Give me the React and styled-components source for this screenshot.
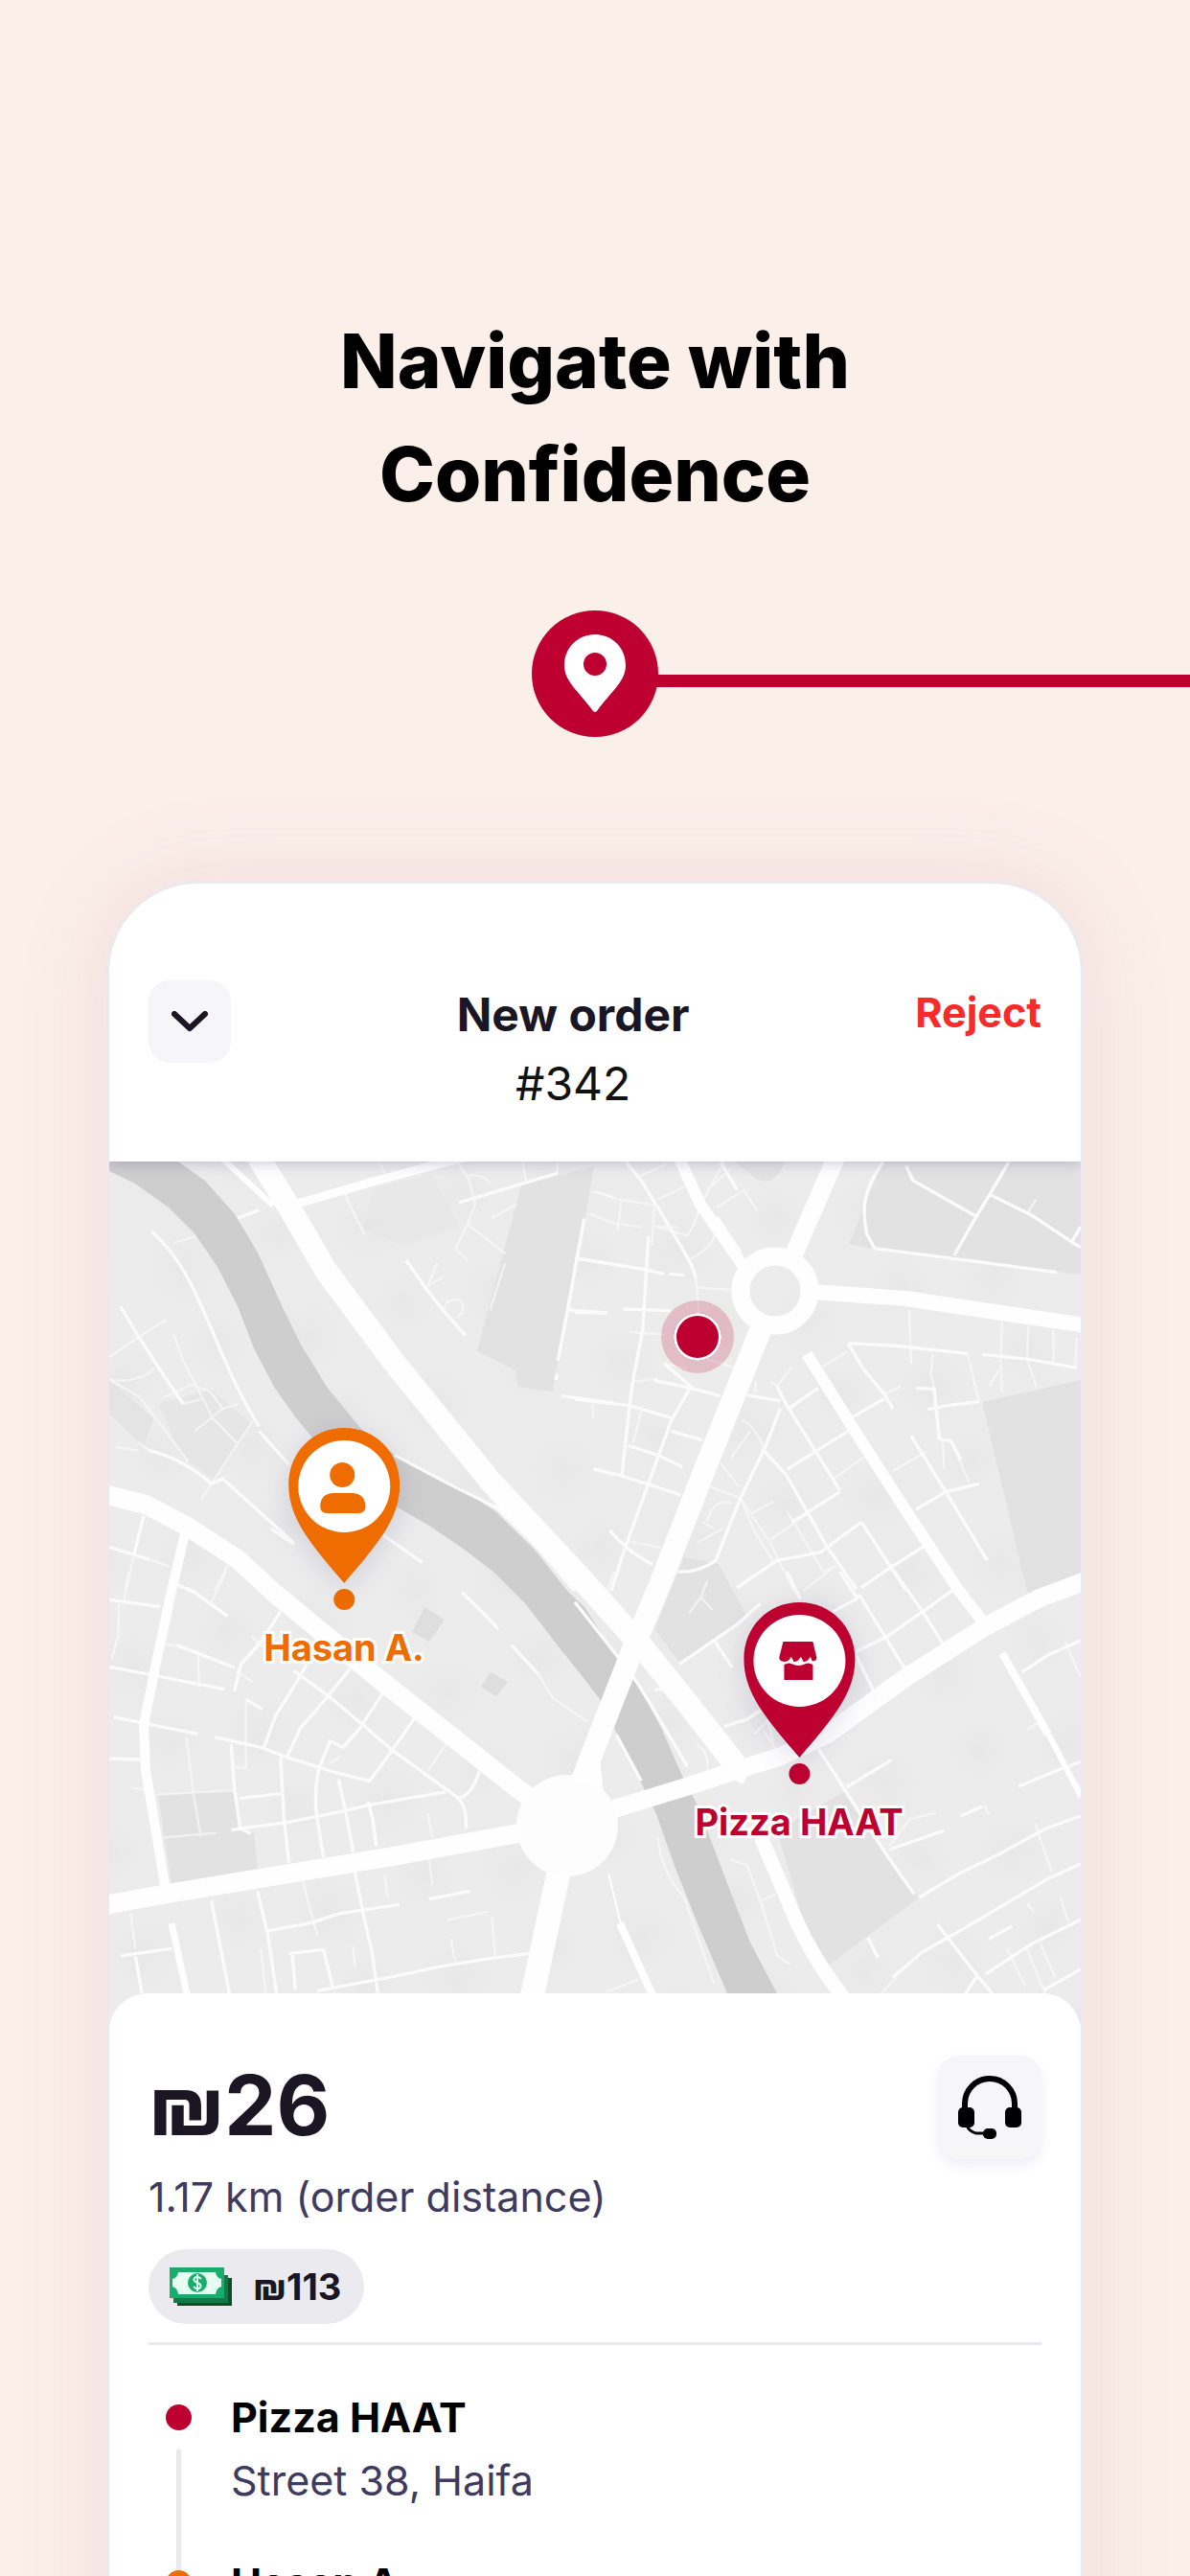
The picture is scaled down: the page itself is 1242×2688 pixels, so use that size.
import React from "react";
import styled, { createGlobalStyle } from "styled-components";

const crimson = "#bd0030";
const orange = "#ee6c00";

// small streets, drawn quarter by quarter
const streets = [
    {
        id: "nw",
        transform: "translate(100 1200) scale(0.3444 0.3333)",
        medium: [
            "M170 255 C260 340 300 440 350 560 S440 780 495 865",
            "M495 880 L585 985",
            "M75 490 L130 585 L205 705 L265 795",
            "M160 940 C240 960 300 1000 350 1045 L385 1030 L600 1230",
            "M430 213 L495 188",
            "M940 345 L1005 440 L1055 505 L1120 580",
            "M1100 165 L1230 125 L1400 72",
            "M1480 215 L1430 500 L1400 660 M1398 700 L1394 720",
            "M1462 340 L1568 358 M1430 500 L1550 510 M1410 770 L1568 792",
            "M905 955 L1060 1040 L1215 1120 L1330 1235 L1450 1380",
            "M40 1243 L165 1282 M145 1145 L115 1270",
            "M530 1185 L600 1235 M870 1205 L990 1292",
        ],
        thin: [
            "M755 135 C775 190 790 215 815 265",
            "M860 38 L875 72 M1095 38 L1130 90 L1150 170 L1125 235 L1090 310 L1128 345",
            "M1130 235 L1180 275 L1242 325 M1200 212 L1275 170",
            "M1130 80 Q1180 75 1195 105 M1293 38 L1305 105 M1400 38 L1398 72",
            "M1240 355 L1195 500 M1035 355 L1005 425 L1050 400",
            "M1055 505 Q1060 460 1100 470 Q1130 490 1095 525",
            "M42 648 L130 585 L215 530",
            "M42 720 L130 770 L175 830 L280 975",
            "M235 575 L265 660 L310 750 L355 840 L430 920",
            "M205 775 L290 735 L345 755 L385 810 L430 797 M265 795 L320 780",
            "M42 720 Q130 730 175 685 M300 880 L385 810",
            "M475 850 L430 920 L350 1045 L320 1092 M130 915 L160 940 M60 930 L130 940",
            "M240 290 L305 270 M115 1270 L92 1380 M165 1282 L225 1305",
            "M400 1300 L360 1380 M250 1370 Q290 1370 300 1380",
            "M1510 1000 L1568 1018 M1508 130 L1568 145 M1505 795 L1508 840",
        ],
    },
    {
        id: "ne",
        transform: "translate(600 1200) scale(0.3457 0.3333)",
        medium: [
            "M155 38 L200 95 L250 180 L300 265 L350 355 L365 400",
            "M440 38 L490 125",
            "M430 210 L500 320",
            "M930 38 C870 130 865 180 882 265 L905 308 L1145 340 L1455 383",
            "M1000 50 L1020 95 L1212 208",
            "M1310 38 L1255 135 L1212 208 L1145 330",
            "M1255 140 L1380 205 L1500 288 L1527 240 M1500 288 L1527 305",
            "M825 605 L960 612 L1185 637 M1230 640 L1370 655 L1515 682",
            "M825 605 L870 685 L935 765 L960 810",
            "M222 270 L205 560 L175 725 L165 800 L142 1020",
            "M0 338 L200 372 L270 388 M285 388 L330 392",
            "M0 780 L165 800 L295 840",
            "M0 508 L95 510 M145 498 L290 503",
            "M270 668 L350 740 L290 850 L220 1050 L150 1250 L110 1380",
            "M55 998 L142 1020 L320 1080",
            "M240 722 L350 745 L440 770 M520 768 L620 785",
            "M620 810 L575 930 L500 1090 L425 1285 Q370 1325 310 1320",
            "M610 740 L640 800 L800 1065",
            "M840 835 L935 778 M645 810 L735 745 M640 1000 L825 880 M655 1165 L800 1070",
            "M490 1370 L610 1285 L740 1260 L865 1165 M865 1165 L950 1300 L1000 1380",
            "M865 1370 L945 1312 L1055 1240 M1030 1125 L1120 1070 L1220 1045",
            "M1015 895 L1120 1070 L1245 1285",
            "M1030 745 L1085 748 L1100 905 L1135 910 L1165 970",
            "M1065 812 L1140 798 L1220 788",
            "M105 1190 Q150 1250 235 1298",
            "M290 880 L385 908",
            "M160 925 L250 955 L325 992",
            "M565 935 L640 1020 L700 1130 L760 1240 L850 1375",
        ],
        thin: [
            "M60 130 L130 155 L240 172 M140 155 L130 250 M190 85 L275 45 M250 155 L340 110",
            "M245 240 L340 268 Q370 220 375 180 L450 38 M350 340 Q410 310 425 260",
            "M240 180 L232 300 M232 238 L310 242 M45 200 L120 230 L200 242",
            "M400 125 L470 60 M430 180 L510 125 L550 190",
            "M365 400 L375 510 M365 430 L475 438",
            "M165 570 L270 578 M270 668 L340 685 M400 655 L475 680",
            "M205 800 L175 920 M175 725 L250 715",
            "M505 845 Q540 860 570 930 M530 880 L470 965 M440 980 L495 1055 M410 1055 L495 1088",
            "M500 1090 L590 1230 L660 1380 M500 1090 L540 1190 L600 1290",
            "M640 1130 L750 1320 L790 1300 M590 1220 L700 1140",
            "M400 1160 Q420 1090 470 1105 M370 1230 L445 1185 M385 1165 L420 1185",
            "M530 1140 L600 1100 M690 1380 L790 1300 M160 1225 L260 1245",
            "M1010 500 L1015 670 M1190 510 L1200 505 M1290 540 L1285 650 L1290 760",
            "M1370 550 L1365 655 L1395 745 M1445 560 L1445 665 M1515 590 L1510 682",
            "M1185 637 L1220 788 M1080 640 L1075 700 L1085 748 M1280 690 L1250 740",
            "M745 680 L825 630 M780 1030 L875 960 M960 1005 L1060 945",
            "M1110 905 L1115 1000 M1135 910 L1190 1040 M1365 200 L1392 155",
            "M935 765 L985 738 M655 680 L610 740 L590 725 M545 720 L545 760",
        ],
    },
    {
        id: "sw",
        transform: "translate(100 1640) scale(0.3444 0.3333)",
        medium: [
            "M42 88 L195 110",
            "M245 40 L300 65 L400 140",
            "M55 455 L150 475 L310 508 M360 518 L500 550 L570 578 L730 630 L830 655 L880 585 L965 460",
            "M42 585 L135 588",
            "M42 298 L180 325 L300 350 L390 368",
            "M245 230 L320 260 L420 300",
            "M560 125 L500 220 L440 290 L420 375",
            "M640 290 L600 360 L545 450 L510 550 M770 305 L695 400 L620 490 L580 578",
            "M870 380 L800 490 L750 550 L710 530 L675 620 Q660 700 670 770 L690 895",
            "M600 310 L700 385 L810 480 L900 560 L1000 635 L1100 710 Q1125 740 1122 805",
            "M1162 625 Q1140 700 1100 710",
            "M410 808 L580 785 L750 750 L830 730 L1060 690",
            "M560 580 L570 770 L585 910",
            "M410 540 L420 680 L438 805 L470 820",
            "M735 650 L755 740 L780 880 M825 720 L840 780 L850 860",
            "M490 1000 L520 1130 L548 1320 M350 1030 L405 1320",
            "M785 940 L810 1070 L835 1180 L855 1320",
            "M520 1125 L650 1100 L740 1070 L920 1042 M1010 1025 L1135 1000",
            "M670 1312 L900 1268 L1050 1235 L1200 1210 L1315 1195",
            "M75 1203 L230 1180 M120 1205 L140 1320",
            "M1110 65 L1170 125 L1220 180 M1260 230 L1340 320",
            "M455 400 L505 430 M435 710 L560 695",
            "M585 1195 L690 1183 L718 1300 M595 1195 L605 1310",
        ],
        thin: [
            "M100 0 L85 90 M70 100 L68 200 L48 275 M350 95 L395 0",
            "M275 520 L295 690 L318 830 M185 698 L415 685 M205 832 L365 818",
            "M455 400 L455 615 L420 612 M205 225 L245 232 M310 245 L312 360",
            "M1062 540 L1005 625 M1005 755 L1020 830 M1340 320 L1385 395 L1490 470",
            "M625 960 L650 1060 L672 1140 M105 1070 L120 1180 M500 1180 L515 1320",
            "M780 1170 L785 1240 M1075 1150 L1090 1225 M1200 1080 L1210 1205",
            "M1010 900 L1020 980 M875 950 L885 1020 M470 200 L505 235 M740 580 L710 600",
            "M1065 1090 L1190 1065 M110 678 L150 680 M425 310 L475 345",
        ],
    },
    {
        id: "se",
        transform: "translate(600 1640) scale(0.3457 0.3333)",
        medium: [
            "M315 290 L420 215 L490 165 L560 100 M640 0 L680 85",
            "M420 215 L475 300 M490 50 L545 10",
            "M780 125 L850 85 L860 75 L1000 310 M800 0 L850 80",
            "M850 250 L940 205 L1050 125 L1145 55 M965 0 L1050 125 L1120 240",
            "M850 265 L905 380",
            "M735 555 L820 690 L880 790 L950 900 L1025 1010",
            "M0 95 L125 260 L190 350 L260 470 L340 610",
            "M125 510 L200 655",
            "M820 675 L955 590 M950 870 L1115 810 M1165 765 L1230 735",
            "M1040 1020 L1160 945 L1280 885 L1420 805 L1527 765",
            "M960 1270 L1050 1190 L1170 1120 L1300 1040 L1430 960 L1527 915",
            "M1240 1260 L1380 1165 L1527 1090",
            "M1095 1105 L1215 1265 L1180 1320 M1215 1265 L1260 1320",
            "M1250 1150 L1320 1110 M1350 315 L1430 260 L1527 215",
            "M1340 672 L1450 625 L1527 595",
            "M1435 510 L1480 600 L1527 690",
            "M885 1145 L915 1210 M240 370 L300 362",
            "M450 485 L520 462 L560 435 M1415 1310 L1527 1245",
        ],
        thin: [
            "M120 0 L85 95 M345 130 L380 80 L400 30 M380 80 L415 120",
            "M570 500 L610 560 M590 460 L540 510 M580 450 L605 570",
            "M250 830 Q260 940 330 1020 L420 1290",
            "M470 900 L520 920 L560 1030 L610 1200 L650 1230 M560 1030 L605 1010",
            "M950 860 L1010 775 L1090 755 M1390 790 L1440 940 M1465 1020 L1490 1095",
            "M1305 1180 L1360 1300 M1360 1170 L1420 1320 M1405 1165 L1450 1270",
            "M1480 220 L1527 330 M1470 580 L1520 700 M95 1315 L190 1278",
            "M1235 730 L1250 760 M1365 495 L1410 465 M1365 1040 L1385 1065",
            "M370 540 Q405 570 400 620 M925 1320 L970 1270",
        ],
    },
];

const mainRoads = [
    ["M265 1200 L300 1257 L341 1327 L410 1420 L513 1547 L600 1640 L669 1717 L714 1773 L769 1843", 24],
    ["M876 1200 L828 1310", 19],
    ["M794 1387 L740 1522 L686 1660 L662 1717 L614 1840 L600 1880", 23],
    ["M848 1348 L946 1355 L998 1363 L1140 1384", 16],
    ["M705 1200 L731 1257 L775 1320", 12],
    ["M842 1413 L901 1507 L950 1583 L1001 1660 L1028 1695", 12],
    ["M1140 1647 L1084 1668 L1029 1697 L946 1750 L863 1810 L814 1833 L769 1847 L721 1863 L620 1894", 19],
    ["M104 1558 L152 1570 L196 1593 L248 1627 L286 1662 L393 1750 L541 1867 L560 1880", 20],
    ["M104 1989 L169 1977 L272 1960 L410 1937 L541 1913 L580 1908", 20],
    ["M193 1600 L179 1660 L162 1740 L150 1800 L152 1847 L162 1907 L172 1967", 10],
    ["M179 2007 L195 2080 L200 2112", 7],
    ["M586 1940 L556 2080 L550 2112", 25],
    ["M794 1917 L821 1980 Q842 2035 877 2080 L900 2112", 15],
    ["M647 2007 L680 2080 L692 2112", 8],
    ["M635 1955 L648 2008", 2],
    ["M300 1259 L393 1232 L490 1206", 9],
    ["M230 1207 L285 1258", 6],
    ["M1046 1725 L1094 1810", 8],
    ["M1094 1810 L1128 1875", 5],
];

const CityMap = () => (
    <MapDrawing
        viewBox="114 1212 1014 900"
        preserveAspectRatio="xMidYMin slice"
        aria-hidden="true"
    >
        <defs>
            <radialGradient id="block">
                <stop offset="0" stopColor="#e8e8e8" />
                <stop offset="1" stopColor="#e8e8e8" stopOpacity="0" />
            </radialGradient>
            <pattern id="blocks" width="150" height="130" patternUnits="userSpaceOnUse" patternTransform="rotate(28)">
                <rect width="150" height="130" fill="#ececec" />
                <circle cx="40" cy="40" r="40" fill="url(#block)" />
                <circle cx="110" cy="92" r="34" fill="url(#block)" />
            </pattern>
        </defs>
        <rect x="114" y="1212" width="1014" height="900" fill="url(#blocks)" />
        <g fill="#e2e2e2">
            <path d="M544 1237 L620 1217 L610 1273 L582 1420 L577 1452 L541 1447 L538 1430 L498 1410 Z" />
            <path d="M921 1212 H1128 V1330 L910 1303 L886 1298 L900 1265 Z" />
            <path d="M1025 1463 L1128 1440 V1642 L1072 1660 Z" />
            <path d="M811 1910 L880 1870 L959 1980 L863 2052 L842 2017 Z" />
            <path d="M1067 1640 H1128 L1074 1665 Z" />
            <path d="M683 1700 L714 1625 L750 1632 L780 1687 L745 1710 L711 1737 Z" />
            <path d="M165 1873 L243 1868 L250 1907 L265 1913 L269 1950 L179 1965 Z" />
            <path d="M766 1212 H820 Q806 1240 790 1230 Z" />
            <path d="M390 1240 L450 1225 L480 1280 L420 1300 L380 1282 Z" opacity="0.35" />
            <path d="M165 1465 L220 1450 L262 1485 L225 1545 L190 1520 Z" opacity="0.6" />
            <path d="M114 1440 L160 1480 L150 1510 L114 1475 Z" opacity="0.8" />
        </g>
        <path
            fill="#cecece"
            d="M100 1212 L114 1222 L141 1235 L176 1260 L203 1287 L227 1322 L248 1363 L265 1407 L286 1447 L307 1477
               L326 1500 L365 1543 L415 1573 L448 1592 L482 1615 L515 1640 L548 1673 L582 1717 L606 1747 L626 1773
               L643 1807 L674 1870 L685 1893 L704 1947 L728 2007 L759 2080 L775 2112 L825 2112 L811 2080 L783 2027
               L762 1973 L738 1910 L726 1880 L712 1853 L690 1803 L666 1757 L643 1728 L610 1677 L592 1660 L558 1617
               L517 1577 L482 1553 L444 1535 L412 1518 L376 1490 L341 1447 L314 1403 L293 1360 L269 1307 L245 1267
               L214 1232 L186 1212 Z"
        />
        <g fill="#dedede">
            <path d="M443 1677 L464 1690 L448 1713 L430 1703 Z" />
            <path d="M512 1745 L530 1755 L518 1770 L502 1760 Z" />
        </g>
        {streets.map(({ id, transform, medium, thin }) => (
            <g key={id} transform={transform} fill="none" stroke="#fbfbfb" strokeLinejoin="round">
                <path d={thin.join(" ")} strokeWidth="7" opacity="0.65" />
                <path d={medium.join(" ")} strokeWidth="10" />
            </g>
        ))}
        <g fill="none" stroke="#fefefe" strokeLinejoin="round">
            {mainRoads.map(([d, width]) => (
                <path key={d} d={d} strokeWidth={width} />
            ))}
        </g>
        <circle cx="809" cy="1347" r="36" fill="none" stroke="#fefefe" strokeWidth="19" />
        <circle cx="592" cy="1905" r="53" fill="#fdfdfd" />
        <path d="M595 1855 L612 1830 L626 1835 L630 1870 Z M755 1850 L770 1832 L788 1838 L775 1862 Z" fill="#fefefe" />
    </MapDrawing>
);

const MapPin = ({ color, label, left, top, children }) => (
    <PinBox $left={left} $top={top} $color={color}>
        <svg width="116" height="162" viewBox="0 0 116 162" aria-hidden="true">
            <path fill={color} d="M58 0 C91 0 116 26 116 59 C116 96 91 123 58 162 C25 123 0 96 0 59 C0 26 25 0 58 0 Z" />
            <circle cx="58" cy="61" r="48" fill="#fff" />
            {children}
        </svg>
        <PinDot />
        <PinLabel>{label}</PinLabel>
    </PinBox>
);

const Banknotes = () => (
    <svg width="65" height="40" viewBox="0 0 65 40" aria-hidden="true">
        <path fill="#0b4f26" d="M8 11 H65 V40 H8 Z" />
        <path fill="#117a48" d="M4 8 H61 V37 H4 Z" />
        <path fill="#18ad6b" d="M0 0 H57 V32 H0 Z" />
        <path fill="#e6fdf2" d="M9 5 H48 Q49 11 54 12 V20 Q49 21 48 28 H9 Q8 21 3 20 V12 Q8 11 9 5 Z" />
        <circle cx="29" cy="16" r="10" fill="#18ad6b" />
        <path
            d="M33 12 Q29 8 26 11 Q24 14 29 16 Q34 18 32 21 Q29 24 25 20 M29 7 V25"
            fill="none"
            stroke="#e6fdf2"
            strokeWidth="2"
        />
    </svg>
);

const Headset = () => (
    <svg width="66" height="66" viewBox="0 0 66 66" aria-hidden="true">
        <path d="M7 36 V29 A26 26 0 0 1 59 29 V36" fill="none" stroke="#000" strokeWidth="6" />
        <rect x="0" y="33" width="17" height="21" rx="5" />
        <rect x="49" y="33" width="17" height="21" rx="5" />
        <path d="M9 52 Q13 61 24 60 H30" fill="none" stroke="#000" strokeWidth="3" />
        <rect x="26" y="55" width="14" height="11" rx="5" />
    </svg>
);

const stops = [
    { name: "Pizza HAAT", address: "Street 38, Haifa", color: crimson },
    { name: "Hasan A.", address: "", color: orange },
];

const App = () => (
    <Page>
        <GlobalStyle />
        <Headline>
            Navigate with
            <br />
            Confidence
        </Headline>
        <Trail>
            <TrailBadge>
                <svg width="64" height="82" viewBox="0 0 64 82" aria-hidden="true">
                    <path
                        fill="#fff"
                        fillRule="evenodd"
                        d="M32 0 C50 0 64 14 64 32 C64 49 51 57 34 80 Q32 82 30 80 C13 57 0 49 0 32 C0 14 14 0 32 0 Z M32 19 A12 12 0 1 0 32 43 A12 12 0 1 0 32 19 Z"
                    />
                </svg>
            </TrailBadge>
            <TrailLine />
        </Trail>
        <Phone>
            <Header>
                <CollapseButton type="button" aria-label="Collapse">
                    <svg width="38" height="22" viewBox="0 0 38 22" aria-hidden="true">
                        <path d="M3 3 L19 18 L35 3" fill="none" stroke="#1a1623" strokeWidth="6" strokeLinecap="round" strokeLinejoin="round" />
                    </svg>
                </CollapseButton>
                <OrderTitle>
                    <h2>New order</h2>
                    <p>#342</p>
                </OrderTitle>
                <RejectButton type="button">Reject</RejectButton>
            </Header>
            <MapArea>
                <CityMap />
                <Courier />
                <MapPin color={orange} label="Hasan A." left={245} top={278}>
                    <circle cx="56" cy="49" r="13" fill={orange} />
                    <path d="M46 68 H67 Q80 69 80 82 Q80 89 73 89 H40 Q33 89 33 82 Q33 69 46 68 Z" fill={orange} />
                </MapPin>
                <MapPin color={crimson} label="Pizza HAAT" left={720} top={460}>
                    <path
                        fill={crimson}
                        d="M41 41 H72 L76 58 Q75 62 71 61 Q70 57 69 57 Q67 62 62 62 Q60 57 59 57 Q57 62 52 62 Q50 57 49 57 Q47 62 42 62 Q36 61 37 57 Z M42 65 Q47 62 52 65 Q57 67 62 65 Q67 62 72 65 V81 H42 Z"
                    />
                </MapPin>
            </MapArea>
            <Sheet>
                <Summary>
                    <div>
                        <Price>₪26</Price>
                        <Distance>1.17 km (order distance)</Distance>
                        <CashPill>
                            <Banknotes />
                            ₪113
                        </CashPill>
                    </div>
                    <SupportButton type="button" aria-label="Support">
                        <Headset />
                    </SupportButton>
                </Summary>
                <Stops>
                    {stops.map((stop) => (
                        <Stop key={stop.name} $color={stop.color}>
                            <h3>{stop.name}</h3>
                            <p>{stop.address}</p>
                        </Stop>
                    ))}
                </Stops>
            </Sheet>
        </Phone>
    </Page>
);

const GlobalStyle = createGlobalStyle`
    * {
        box-sizing: border-box;
    }
    body {
        margin: 0;
        background: #fbefea;
        font-family: Inter, "Liberation Sans", sans-serif;
    }
    h1, h2, h3, p, ul {
        margin: 0;
        padding: 0;
    }
    button {
        border: 0;
        padding: 0;
        font-family: inherit;
        cursor: pointer;
    }
    svg {
        display: block;
    }
`;

const Page = styled.main`
    display: flex;
    flex-direction: column;
    height: 100vh;
    overflow: hidden;
    padding-top: 318px;
`;

const Headline = styled.h1`
    flex: none;
    font-size: 78px;
    font-weight: 800;
    line-height: 118px;
    text-align: center;
    color: #000;
`;

const Trail = styled.div`
    flex: none;
    display: grid;
    grid-template-columns: 1fr auto 1fr;
    align-items: center;
    margin-top: 83px;
`;

const TrailBadge = styled.div`
    grid-column: 2;
    display: flex;
    align-items: center;
    justify-content: center;
    width: 132px;
    height: 132px;
    border-radius: 50%;
    background: ${crimson};
`;

const TrailLine = styled.div`
    height: 13px;
    margin-top: 14px;
    margin-left: -2px;
    background: ${crimson};
`;

const Phone = styled.section`
    flex: none;
    margin: 150px 111px 0;
    border: 3px solid #e9e9ef;
    border-radius: 96px 96px 0 0;
    overflow: hidden;
    background: #fff;
    box-shadow: 0 0 90px 10px rgba(180, 90, 100, 0.1);
`;

const Header = styled.header`
    position: relative;
    z-index: 1;
    display: flex;
    align-items: flex-start;
    justify-content: space-between;
    height: 290px;
    padding: 101px 41px 0;
    background: #fff;
    box-shadow: 0 2px 12px rgba(50, 50, 120, 0.25);
`;

const CollapseButton = styled.button`
    display: flex;
    align-items: center;
    justify-content: center;
    width: 86px;
    height: 86px;
    border-radius: 22px;
    background: #f6f6f9;
`;

const OrderTitle = styled.div`
    font-size: 48px;
    line-height: 72px;
    text-align: center;
    color: #1a1623;
    h2 {
        font-size: inherit;
        font-weight: 700;
    }
    p {
        color: #111;
    }
`;

const RejectButton = styled.button`
    background: none;
    font-size: 43px;
    font-weight: 700;
    line-height: 66px;
    color: #f92a2a;
`;

const MapArea = styled.div`
    position: relative;
    height: 900px;
    overflow: hidden;
`;

const MapDrawing = styled.svg`
    width: 100%;
    height: 100%;
`;

const Courier = styled.div`
    position: absolute;
    left: 614px;
    top: 183px;
    width: 76px;
    height: 76px;
    transform: translate(-50%, -50%);
    border: 13px solid rgba(189, 0, 48, 0.2);
    border-radius: 50%;
    background: ${crimson} padding-box;
    box-shadow: inset 0 0 0 3px #fff;
`;

const PinBox = styled.div`
    position: absolute;
    left: ${(props) => props.$left}px;
    top: ${(props) => props.$top}px;
    display: flex;
    flex-direction: column;
    align-items: center;
    transform: translateX(-50%);
    color: ${(props) => props.$color};
    svg {
        filter: drop-shadow(0 6px 14px rgba(50, 50, 120, 0.15));
        overflow: visible;
    }
`;

const PinDot = styled.span`
    width: 22px;
    height: 22px;
    margin-top: 6px;
    border-radius: 50%;
    background: currentColor;
`;

const PinLabel = styled.span`
    margin-top: 6px;
    font-size: 38px;
    font-weight: 700;
    line-height: 66px;
    white-space: nowrap;
    -webkit-text-stroke: 6px #fff;
    paint-order: stroke fill;
`;

const Sheet = styled.div`
    position: relative;
    z-index: 1;
    margin-top: -32px;
    padding: 65px 41px 0;
    border-radius: 40px 40px 0 0;
    background: #fff;
`;

const Summary = styled.div`
    display: flex;
    align-items: flex-start;
    justify-content: space-between;
    padding-bottom: 19px;
    border-bottom: 3px solid #e9e9ee;
`;

const Price = styled.p`
    font-size: 86px;
    font-weight: 700;
    line-height: 104px;
    color: #1a1623;
`;

const Distance = styled.p`
    margin-top: 10px;
    font-size: 43px;
    font-weight: 400;
    line-height: 66px;
    color: #3f3b60;
`;

const CashPill = styled.div`
    display: inline-flex;
    align-items: center;
    gap: 22px;
    height: 78px;
    margin-top: 22px;
    padding: 0 24px 0 22px;
    border-radius: 39px;
    background: #ebeaef;
    font-size: 38px;
    font-weight: 700;
    color: #1a1623;
`;

const SupportButton = styled.button`
    display: flex;
    align-items: center;
    justify-content: center;
    width: 108px;
    height: 108px;
    border-radius: 22px;
    background: #f6f6f9;
    box-shadow: 0 6px 12px rgba(80, 80, 200, 0.1);
`;

const Stops = styled.ul`
    padding: 42px 18px 0;
    list-style: none;
`;

const Stop = styled.li`
    position: relative;
    height: 173px;
    padding-left: 68px;
    h3 {
        font-size: 43px;
        font-weight: 700;
        line-height: 66px;
        color: #000;
    }
    p {
        font-size: 43px;
        font-weight: 400;
        line-height: 66px;
        color: #3f3b60;
    }
    &::before {
        content: "";
        position: absolute;
        left: 0;
        top: 20px;
        width: 27px;
        height: 27px;
        border-radius: 50%;
        background: ${(props) => props.$color};
    }
    &::after {
        content: "";
        position: absolute;
        left: 11px;
        top: 66px;
        width: 5px;
        height: 128px;
        border-radius: 3px;
        background: #e9e9ee;
    }
`;

export default App;
